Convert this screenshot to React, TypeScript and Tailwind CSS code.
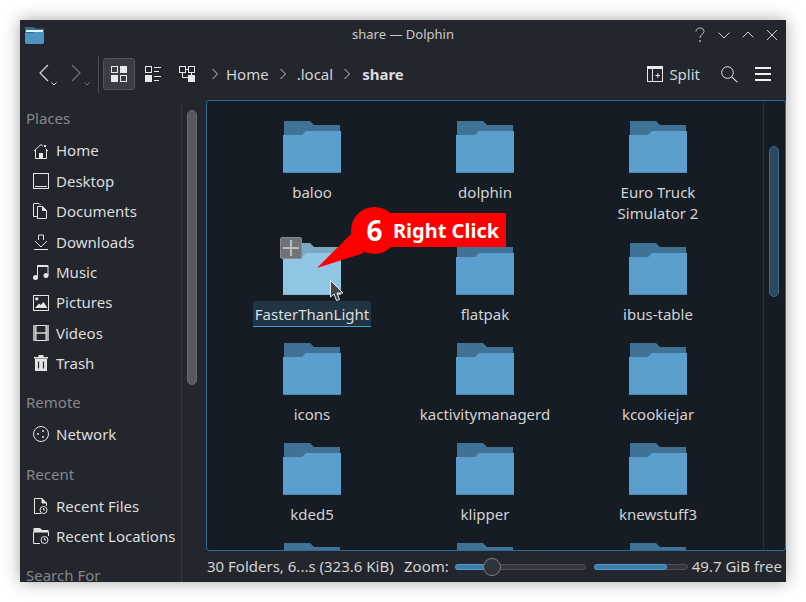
const NAMES: string[][] = [
  ["baloo"], ["dolphin"], ["Euro Truck", "Simulator 2"],
  ["FasterThanLight"], ["flatpak"], ["ibus-table"],
  ["icons"], ["kactivitymanagerd"], ["kcookiejar"],
  ["kded5"], ["klipper"], ["knewstuff3"],
  [""], [""], [""],
];

function Folder({ light = false }: { light?: boolean }) {
  return (
    <svg width="58" height="52" viewBox="0 0 58 52" className="block">
      <path d="M1 0H27L31 4H57V20H1Z" fill={light ? "#7aa9c6" : "#3f7294"} />
      <path d="M1 15H19.5L23.5 11H57V13H24.5L20.5 17H1Z" fill={light ? "#6f9cb8" : "#37627f"} />
      <path d="M0 14H19L23 10H58V52H0Z" fill={light ? "#90c6e4" : "#5a9fcd"} />
      <rect x="0" y="51" width="58" height="1" fill={light ? "#82b4d1" : "#4c8bb5"} />
    </svg>
  );
}

function Icon({ children, w = 16, h = 16 }: { children: React.ReactNode; w?: number; h?: number }) {
  return (
    <svg width={w} height={h} viewBox={`0 0 ${w} ${h}`} fill="none" stroke="#e4e5e6" strokeWidth="1" className="block shrink-0">
      {children}
    </svg>
  );
}

const PLACES: [string, React.ReactNode][] = [
  ["Home", <><path d="M1 8L8 1.5L10 3.3M12.5 5.5L15 8" /><path d="M2.5 7V15.5H13.5V7" /><rect x="6" y="10" width="4" height="5.5" fill="#e4e5e6" stroke="none" /><rect x="11" y="2" width="2" height="2" fill="#e4e5e6" stroke="none" /></>],
  ["Desktop", <><rect x="0.5" y="0.5" width="15" height="15" /><path d="M2 13.5H14" /></>],
  ["Documents", <><path d="M0.5 1V13.5H4" /><path d="M0.5 0.5H6L7.5 2" /><path d="M4.5 3.5H9.5L13.5 7.5V15.5H4.5Z" /><path d="M9.5 3.5V7.5H13.5" fill="#e4e5e6" /></>],
  ["Downloads", <><path d="M5.5 6V1H10.5V6" /><path d="M2 7L8 13L14 7" /><path d="M1 15.5H15" /></>],
  ["Music", <><path d="M4.5 13V1.5H15V11" /><rect x="4.5" y="1" width="10.5" height="2" fill="#e4e5e6" stroke="none" /><circle cx="2.5" cy="13.5" r="2.5" fill="#e4e5e6" stroke="none" /><circle cx="13" cy="11.5" r="2.5" fill="#e4e5e6" stroke="none" /></>],
  ["Pictures", <><rect x="0.5" y="0.5" width="15" height="15" /><circle cx="3.8" cy="3.8" r="1.6" fill="#e4e5e6" stroke="none" /><path d="M2 13L6 8.5L7.5 10L10.5 7L14.5 13Z" fill="#e4e5e6" stroke="none" /></>],
  ["Videos", <><rect x="0.5" y="0.5" width="15" height="15" /><rect x="0" y="0" width="3" height="16" fill="#a9abae" stroke="none" /><rect x="13" y="0" width="3" height="16" fill="#a9abae" stroke="none" /><rect x="3" y="7" width="10" height="2" fill="#a9abae" stroke="none" /><path d="M3 0.5V15.5M13 0.5V15.5" /></>],
  ["Trash", <><rect x="2" y="4" width="12" height="12" fill="#e4e5e6" stroke="none" /><rect x="1" y="2" width="14" height="1.6" fill="#e4e5e6" stroke="none" /><rect x="5.5" y="0" width="5" height="2.5" fill="#e4e5e6" stroke="none" /><path d="M5.5 6.5V13.5M10.5 6.5V13.5" stroke="#23262d" strokeWidth="1.2" /></>],
];

function PlaceRow({ label, icon, pitch = "h-[30.4px]" }: { label: string; icon: React.ReactNode; pitch?: string }) {
  return (
    <div className={`flex items-center gap-[7px] pl-[13px] ${pitch}`}>
      <Icon>{icon}</Icon>
      <span className="text-[#dcdddf] whitespace-nowrap">{label}</span>
    </div>
  );
}

function Heading({ children, className = "" }: { children: React.ReactNode; className?: string }) {
  return <div className={`pl-[6px] h-[22px] leading-[22px] text-[#84878b] ${className}`}>{children}</div>;
}

function Chevron({ right = true, className = "" }: { right?: boolean; className?: string }) {
  return (
    <svg width="8" height="12" viewBox="0 0 8 12" fill="none" stroke="#c9cacc" className={`block shrink-0 ${className}`}>
      <path d={right ? "M1.5 1L6.5 6L1.5 11" : "M6.5 1L1.5 6L6.5 11"} />
    </svg>
  );
}

export default function App() {
  return (
    <div className="relative w-[806px] h-[602px] bg-white pl-[20px] pt-[20px] overflow-hidden font-['Noto_Sans',sans-serif] text-[15px]">
      <div className="flex flex-col w-[766px] h-[562px] bg-[#23262d] shadow-[0_0_16px_rgba(0,0,0,0.35)] overflow-hidden">
        {/* Title bar */}
        <div className="grid grid-cols-[1fr_auto_1fr] items-center h-[30px] shrink-0 pl-[7px] pr-[7px] mb-[2px]">
          <svg width="19" height="17" viewBox="0 0 19 17" className="block -ml-[2px]">
            <path d="M0 0H9L11 1.5H19V8H0Z" fill="#2f6c96" />
            <rect x="1" y="3" width="17" height="2" fill="#e8f0f5" />
            <path d="M0 6H8L9 5H19V16L18 17H1L0 16Z" fill="#4f93c4" />
          </svg>
          <div className="text-[13px] text-[#c9cacc]">share — Dolphin</div>
          <div className="flex items-center justify-end gap-[10px]">
            <svg width="14" height="16" viewBox="0 0 14 16" fill="none" stroke="#c0c1c3" className="block"><path d="M3 4.5C3 2 5 1 7 1C9.5 1 11 2.5 11 4.5C11 7.5 7 7 7 11" /><circle cx="7" cy="14" r="0.9" fill="#c0c1c3" stroke="none" /></svg>
            <svg width="14" height="14" viewBox="0 0 14 14" fill="none" stroke="#d0d1d3" className="block"><path d="M1.5 4.5L7 10L12.5 4.5" /></svg>
            <svg width="14" height="14" viewBox="0 0 14 14" fill="none" stroke="#d0d1d3" className="block"><path d="M1.5 9.5L7 4L12.5 9.5" /></svg>
            <svg width="14" height="14" viewBox="0 0 14 14" fill="none" stroke="#d0d1d3" className="block"><path d="M2 2L12 12M12 2L2 12" /></svg>
          </div>
        </div>

        {/* Toolbar */}
        <div className="flex items-center h-[46px] shrink-0 pl-[18px] pb-[2px] text-[#d2d3d5]">
          <div className="relative w-[24px] h-[20px]">
            <svg width="11" height="18" viewBox="0 0 11 18" fill="none" stroke="#d8d9db" className="block"><path d="M10 1L2 9L10 17" strokeWidth="1.2" /></svg>
            <svg width="6" height="4" viewBox="0 0 6 4" fill="none" stroke="#d8d9db" className="absolute left-[13px] top-[18px]"><path d="M0.5 0.5L3 3L5.5 0.5" /></svg>
          </div>
          <div className="relative ml-[9px] w-[26px] h-[20px]">
            <svg width="11" height="18" viewBox="0 0 11 18" fill="none" stroke="#6e7175" className="block"><path d="M1 1L9 9L1 17" strokeWidth="1.2" /></svg>
            <svg width="6" height="4" viewBox="0 0 6 4" fill="none" stroke="#6e7175" className="absolute left-[13px] top-[18px]"><path d="M0.5 0.5L3 3L5.5 0.5" /></svg>
          </div>
          <div className="w-px h-[37px] bg-[#4b4e54] ml-[1px]" />
          <div className="ml-[4px] w-[32px] h-[32px] rounded-[3px] bg-[#3a3d44] border border-[#53565c] flex items-center justify-center">
            <svg width="16" height="16" viewBox="0 0 16 16" fill="none" stroke="#e8e9ea" className="block">
              <rect x="0.5" y="0.5" width="6" height="6" />
              <rect x="9" y="0" width="7" height="7" fill="#e8e9ea" stroke="none" />
              <rect x="0" y="9" width="7" height="7" fill="#e8e9ea" stroke="none" />
              <rect x="9.5" y="9.5" width="6" height="6" />
            </svg>
          </div>
          <svg width="16" height="16" viewBox="0 0 16 16" fill="none" stroke="#e8e9ea" className="block ml-[10px]">
            <rect x="0.5" y="0.5" width="6" height="6" />
            <rect x="0" y="9" width="7" height="7" fill="#e8e9ea" stroke="none" />
            <path d="M9 1.5H16M9 5.5H14M9 10.5H16M9 14.5H14" />
          </svg>
          <svg width="16" height="16" viewBox="0 0 16 16" fill="none" stroke="#e8e9ea" className="block ml-[18px]">
            <rect x="0.5" y="0.5" width="6" height="6" />
            <rect x="9.5" y="0.5" width="6" height="6" />
            <path d="M7 3.5H9M12.5 7V9M3.5 7V11.5H9" />
            <rect x="9" y="9" width="7" height="7" fill="#e8e9ea" stroke="none" />
          </svg>
          <Chevron className="ml-[16px]" />
          <span className="ml-[7px]">Home</span>
          <Chevron className="ml-[10px]" />
          <span className="ml-[10px]">.local</span>
          <Chevron className="ml-[10px]" />
          <span className="ml-[11px] font-bold text-[#dcdddf]">share</span>
          <div className="flex-1" />
          <svg width="16" height="16" viewBox="0 0 16 16" fill="none" stroke="#e8e9ea" className="block">
            <rect x="0.5" y="0.5" width="15" height="15" />
            <rect x="0" y="0" width="16" height="3" fill="#e8e9ea" stroke="none" />
            <path d="M5.5 3V15.5M8.5 9.5H13M10.75 7.25V11.75" />
          </svg>
          <span className="ml-[6px]">Split</span>
          <svg width="17" height="17" viewBox="0 0 17 17" fill="none" stroke="#e0e1e2" className="block ml-[21px]">
            <circle cx="6.5" cy="6.5" r="5.8" />
            <path d="M10.8 10.8L16.2 16.2" strokeWidth="1.2" />
          </svg>
          <div className="ml-[17px] mr-[15px] w-[16px] flex flex-col gap-[4px]">
            <div className="h-[2px] bg-[#eeeff0]" />
            <div className="h-[2px] bg-[#eeeff0]" />
            <div className="h-[2px] bg-[#eeeff0]" />
          </div>
        </div>

        {/* Body */}
        <div className="flex flex-1 min-h-0 mt-[2px]">
          {/* Places */}
          <div className="w-[161px] shrink-0 h-[482px] pt-[7px] overflow-hidden">
            <Heading>Places</Heading>
            <div className="pt-[6.4px]">
              {PLACES.map(([l, i]) => <PlaceRow key={l} label={l} icon={i} />)}
            </div>
            <Heading className="mt-[12.6px]">Remote</Heading>
            <div className="pt-[6px]">
              <PlaceRow label="Network" icon={<><circle cx="8" cy="8" r="7.5" /><circle cx="5" cy="8" r="1" fill="#e4e5e6" stroke="none" /><circle cx="10" cy="5" r="1" fill="#e4e5e6" stroke="none" /><circle cx="10" cy="11" r="1" fill="#e4e5e6" stroke="none" /></>} />
            </div>
            <Heading className="mt-[13px]">Recent</Heading>
            <div className="pt-[7px]">
              <PlaceRow pitch="h-[29.6px]" label="Recent Files" icon={<><path d="M8 15.5H1.5V0.5H9L13.5 5V8" /><path d="M9 0.5V5H13.5" fill="#e4e5e6" /><circle cx="10.5" cy="12" r="3.5" /><path d="M10.5 10V12H12" /></>} />
              <PlaceRow label="Recent Locations" icon={<><path d="M0.5 4H15.5V8M7 15.5H0.5V4" /><path d="M0.5 0H7L9 2H15.5V4H0.5Z" fill="#e4e5e6" stroke="none" /><circle cx="11.5" cy="12" r="3.5" /><path d="M11.5 10V12H13" /></>} />
            </div>
            <Heading className="mt-[13px]">Search For</Heading>
          </div>
          {/* Sidebar separator and scrollbar */}
          <div className="w-px h-[477px] mt-[5px] bg-[#34373d] shrink-0" />
          <div className="w-[24px] shrink-0 pl-[5px] pt-[10px]">
            <div className="w-[10px] h-[275px] rounded-[5px] bg-[#55585d] border border-[#676a6f]" />
          </div>
          {/* Main */}
          <div className="flex flex-col w-[580px] shrink-0">
            <div className="flex h-[451px] shrink-0 rounded-[3px] border border-[#2c6c97] bg-[#161c24] overflow-hidden text-[#d2d3d5]">
              <div className="grid grid-cols-[173px_173px_173px] grid-rows-[122px_100px_100px_100px_100px] w-[556px] shrink-0 pl-[18px] pt-[20px]">
                {NAMES.map((lines, idx) => (
                  <div key={idx} className="flex flex-col items-center">
                    {lines[0] === "FasterThanLight" ? (
                      <>
                        <div className="relative">
                          <Folder light />
                          <div className="absolute left-[-3px] top-[-6px] w-[22px] h-[22px] rounded-[2px] bg-[#6f7378] border border-[#878a8e] flex items-center justify-center">
                            <svg width="16" height="16" viewBox="0 0 16 16" fill="none" stroke="#b9bbbd" strokeWidth="2"><path d="M8 0V16M0 8H16" /></svg>
                          </div>
                        </div>
                        <div className="mt-[6px] ml-[1px] px-[2px] pt-[3px] h-[26px] leading-[21px] bg-[#203444] border-b border-[#3d9fd9] text-[#dcdddf]">{lines[0]}</div>
                      </>
                    ) : (
                      <>
                        <Folder />
                        <div className="mt-[9px] ml-[1px] leading-[20.6px] text-center">
                          {lines.map((t, j) => <div key={j}>{t}</div>)}
                        </div>
                      </>
                    )}
                  </div>
                ))}
              </div>
              <div className="w-px bg-[#2b3038] shrink-0" />
              <div className="flex-1 pl-[5px] pt-[45px]">
                <div className="w-[10px] h-[151px] rounded-[5px] bg-[#2b4a60] border border-[#356a8e]" />
              </div>
            </div>
            {/* Status */}
            <div className="flex items-center h-[31px] pl-[1px] text-[#d2d3d5] whitespace-nowrap">
              <span className="w-[186px]">30 Folders, 6...s (323.6 KiB)</span>
              <span className="ml-[11px]">Zoom:</span>
              <div className="relative ml-[6px] w-[131px] h-[6px] rounded-[3px] bg-[#33363c] border border-[#4c4f55]">
                <div className="w-[30px] h-[6px] -mt-px -ml-px rounded-[3px] bg-[#3d7ea8] border border-[#4d9cd0]" />
                <div className="absolute left-[27px] top-[-7px] w-[18px] h-[18px] rounded-full bg-[#2f3238] border border-[#7b7e82]" />
              </div>
              <div className="ml-[8px] w-[94px] h-[6px] rounded-[3px] bg-[#33363c] border border-[#4c4f55]">
                <div className="w-[73px] h-[6px] -mt-px -ml-px rounded-[3px] bg-[#3d7ea8] border border-[#4d9cd0]" />
              </div>
              <span className="ml-[4px]">49.7 GiB free</span>
            </div>
          </div>
        </div>
      </div>

      {/* Drag cursor */}
      <svg width="14" height="22" viewBox="0 0 14 22" className="absolute left-[330px] top-[280px]">
        <path d="M0.5 0.5V17L4 14L6.5 20.5L9.5 19.5L7 13H13Z" fill="#44474a" stroke="#e8e8e8" strokeWidth="1" />
      </svg>

      {/* Callout */}
      <div className="absolute left-[351px] top-[207px] flex items-center h-[47px] text-white font-bold">
        <svg width="56" height="62" viewBox="0 0 56 62" className="absolute left-[-35px] top-[0px]">
          <path d="M1 61L36 26L48 46Z" fill="#fe0000" />
        </svg>
        <div className="absolute left-[20px] top-[6px] w-[135px] h-[34px] bg-[#fe0000]" />
        <div className="relative w-[47px] h-[47px] rounded-full bg-[#fe0000] text-center text-[28px] leading-[47px]">6</div>
        <span className="relative ml-[-5px] text-[20px]">Right Click</span>
      </div>
    </div>
  );
}
